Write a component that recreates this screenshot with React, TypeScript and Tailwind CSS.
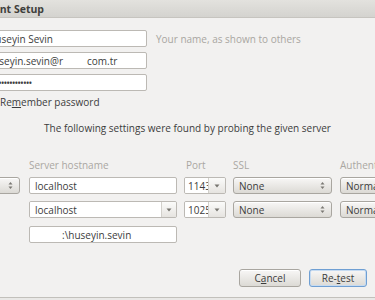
import React from 'react'

const font = "font-['Open_Sans',sans-serif]"

function UpDown() {
  return (
    <svg width="5" height="9" viewBox="0 0 5 9" className="shrink-0">
      <path d="M0.5 3.5 2.5 1 4.5 3.5Z" fill="#7a7873" />
      <path d="M0.5 5.5 2.5 8 4.5 5.5Z" fill="#7a7873" />
    </svg>
  )
}

function Down() {
  return (
    <svg width="6" height="4" viewBox="0 0 6 4" className="shrink-0">
      <path d="M0.5 0.5 5.5 0.5 3 3.5Z" fill="#77756f" />
    </svg>
  )
}

function Select({ value, className }: { value: string; className: string }) {
  return (
    <div
      className={`h-[17px] shrink-0 flex items-center justify-between pl-[5px] pr-[6px] rounded-[3px] border border-[#a9a6a0] bg-gradient-to-b from-[#f8f7f6] to-[#dcdad5] shadow-[inset_0_1px_0_#ffffff] ${className}`}
    >
      <span className="whitespace-nowrap">{value}</span>
      <UpDown />
    </div>
  )
}

function Combo({ value, className, entry }: { value: string; className: string; entry: string }) {
  return (
    <div className={`h-[17px] shrink-0 flex rounded-[2px] border border-[#bcb9b4] overflow-hidden ${className}`}>
      <div className={`bg-white flex items-center pl-[3px] overflow-hidden whitespace-nowrap shrink-0 ${entry}`}>{value}</div>
      <div className="flex-1 flex items-center justify-center border-l border-[#d2d0cb] bg-gradient-to-b from-[#fbfbfa] to-[#e6e4e0]">
        <Down />
      </div>
    </div>
  )
}

export default function App() {
  return (
    <div className={`w-[375px] h-[300px] overflow-hidden bg-[#f2f1f0] text-[#3c3c3c] text-[10px] leading-[14px] ${font} flex flex-col`}>
      {/* title bar */}
      <div className="h-[18px] shrink-0 flex items-center bg-gradient-to-b from-[#e3e2de] to-[#d4d3cf] border-b border-[#c6c4bf]">
        <div className="w-[44px] flex justify-end whitespace-nowrap font-bold text-[10.5px] text-[#3f3f3c]">
          Mail Account Setup
        </div>
      </div>

      {/* identity */}
      <div className="flex flex-col gap-[5px] mt-[12px]">
        <div className="flex items-center">
          <div className="ml-[-18px] w-[165px] h-[17px] shrink-0 bg-white border border-[#bcb9b4] rounded-[2px] flex items-center pl-[5px] whitespace-nowrap">
            Hüseyin Sevin
          </div>
          <span className="ml-[9px] text-[#a9a6a1] whitespace-nowrap">Your name, as shown to others</span>
        </div>
        <div className="flex items-center">
          <div className="ml-[-18px] w-[165px] h-[17px] shrink-0 bg-white border border-[#bcb9b4] rounded-[2px] flex items-center pl-[4px] whitespace-nowrap">
            huseyin.sevin@r<span className="inline-block w-[24px]" />com.tr
          </div>
        </div>
        <div className="flex items-center">
          <div className="ml-[-18px] w-[165px] h-[17px] shrink-0 bg-white border border-[#bcb9b4] rounded-[2px] flex items-center pl-[4px] whitespace-nowrap text-[10px] tracking-[-1px]">
            ••••••••••••••••
          </div>
        </div>
      </div>

      <div className="mt-[4px] whitespace-nowrap">
        Re<span className="underline">m</span>ember password
      </div>

      <div className="mt-[12px] text-center whitespace-nowrap">
        The following settings were found by probing the given server
      </div>

      {/* server table */}
      <div className="mt-[23px] flex text-[#aaa7a2] whitespace-nowrap">
        <span className="ml-[29px] w-[148px] shrink-0">Server hostname</span>
        <span className="ml-[9px] w-[40px] shrink-0">Port</span>
        <span className="ml-[7px] w-[99px] shrink-0">SSL</span>
        <span className="ml-[8px] shrink-0">Authentication</span>
      </div>

      <div className="mt-[5px] flex items-center">
        <Select value="IMAP" className="ml-[-60px] w-[80px]" />
        <div className="ml-[9px] w-[148px] h-[17px] shrink-0 bg-white border border-[#bcb9b4] rounded-[2px] flex items-center pl-[5px]">
          localhost
        </div>
        <Combo value="1143" className="ml-[7px] w-[42px]" entry="w-[23px]" />
        <Select value="None" className="ml-[7px] w-[99px]" />
        <Select value="Normal password" className="ml-[8px] w-[110px]" />
      </div>

      <div className="mt-[7px] flex items-center">
        <Combo value="localhost" className="ml-[29px] w-[148px]" entry="w-[131px] pl-[5px]" />
        <Combo value="1025" className="ml-[7px] w-[42px]" entry="w-[23px]" />
        <Select value="None" className="ml-[7px] w-[99px]" />
        <Select value="Normal password" className="ml-[8px] w-[110px]" />
      </div>

      <div className="mt-[8px] flex items-center">
        <div className="ml-[29px] w-[148px] h-[17px] shrink-0 bg-white border border-[#bcb9b4] rounded-[2px] flex items-center pl-[32px] whitespace-nowrap">
          :\huseyin.sevin
        </div>
      </div>

      {/* buttons */}
      <div className="mt-[26px] flex justify-end gap-[8px] pr-[8px]">
        <button className="w-[62px] h-[18px] rounded-[3px] border border-[#a9a6a0] bg-gradient-to-b from-[#f8f7f6] to-[#dcdad5] shadow-[inset_0_1px_0_#ffffff] flex items-center justify-center">
          C<span className="underline">a</span>ncel
        </button>
        <button className="w-[58px] h-[18px] rounded-[3px] border border-[#6f9fd3] bg-gradient-to-b from-[#f8f7f6] to-[#dcdad5] shadow-[inset_0_0_0_1px_#c6dbf1] flex items-center justify-center">
          Re-<span className="underline">t</span>est
        </button>
      </div>

      <div className="mt-auto h-[3px] border-t border-[#c2c0bb] bg-[#e9e8e6]" />
    </div>
  )
}
